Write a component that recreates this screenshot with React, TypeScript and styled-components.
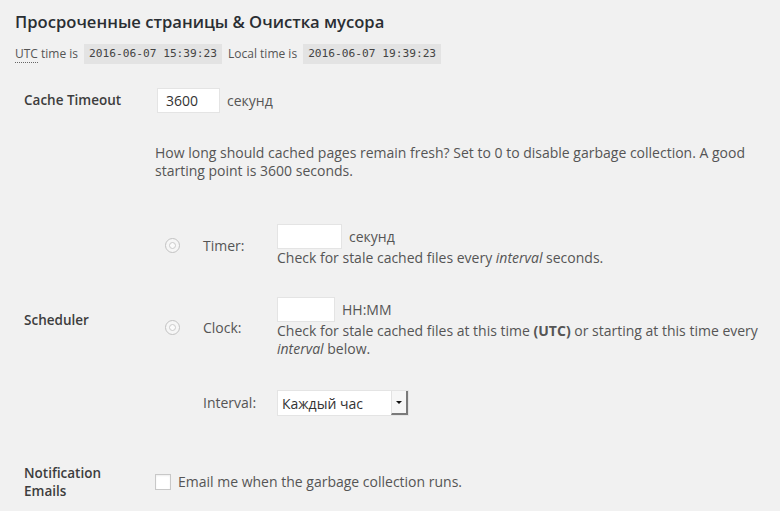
import React from 'react';
import styled, { createGlobalStyle } from 'styled-components';

const GlobalStyle = createGlobalStyle`
  html, body {
    margin: 0;
    padding: 0;
    background: #f1f1f1;
  }
  body {
    font-family: "Open Sans", "Noto Sans", sans-serif;
    font-size: 14px;
    color: #444;
  }
`;

const StyledPage = styled.div`
  width: 780px;
  height: 511px;
  overflow: hidden;
  padding: 11px 0 0 15px;
  box-sizing: border-box;
`;

const StyledTitle = styled.h3`
  margin: 0;
  font-size: 16.6px;
  line-height: 22px;
  font-weight: 600;
  color: #2a2e33;
`;

const StyledTimeLine = styled.p`
  margin: 11px 0 0;
  display: flex;
  align-items: center;
  gap: 6px;
  font-size: 12px;
  line-height: 20px;
  color: #555;
`;

const StyledAbbr = styled.abbr`
  text-decoration: none;
  border-bottom: 1px dotted #666;
  line-height: 15px;
`;

const StyledCode = styled.code`
  background: #e3e3e3;
  padding: 0 5px;
  font-family: "DejaVu Sans Mono", "Liberation Mono", monospace;
  font-size: 11.2px;
  line-height: 20px;
  color: #444;
`;

const StyledForm = styled.div`
  margin: 24px 0 0 9px;
  display: grid;
  grid-template-columns: 131px 1fr;
  row-gap: 44px;
  align-items: center;
`;

const StyledLabel = styled.div<{ $top?: boolean; $mt?: number }>`
  max-width: 112px;
  margin-top: ${p => p.$mt ?? 0}px;
  font-weight: 600;
  font-size: 13.5px;
  line-height: ${p => (p.$top ? '25px' : '18px')};
  color: #3d3d3d;
  align-self: ${p => (p.$top ? 'start' : 'center')};
`;

const StyledInline = styled.div<{ $mt?: number }>`
  display: flex;
  align-items: center;
  gap: 7px;
  margin-top: ${p => p.$mt ?? 0}px;
  line-height: 18px;
  color: #555;
`;

const StyledInput = styled.input<{ $w: number; $ml?: number }>`
  box-sizing: border-box;
  width: ${p => p.$w}px;
  height: 25px;
  margin: 0 0 0 ${p => p.$ml ?? 0}px;
  padding: 2px 8px;
  border: 1px solid #e4e4e4;
  background: #fff;
  font-family: "Open Sans", sans-serif;
  font-size: 14px;
  color: #333;
  outline: none;
`;

const StyledDescription = styled.p<{ $mt?: number }>`
  margin: ${p => p.$mt ?? 0}px 0 0;
  font-size: 14px;
  line-height: 18px;
  color: #555;
`;

const StyledScheduler = styled.div`
  display: grid;
  grid-template-columns: 38px 74px 1fr;
  row-gap: 30px;
  align-items: center;
  padding-left: 10px;
`;

const StyledRadio = styled.span`
  box-sizing: border-box;
  width: 15px;
  height: 15px;
  border-radius: 50%;
  border: 1px solid #c2c2c2;
  background: #f6f6f6;
  display: flex;
  align-items: center;
  justify-content: center;
  &::after {
    content: '';
    width: 7px;
    height: 7px;
    border-radius: 50%;
    border: 1px solid #cacaca;
    background: #fbfbfb;
    box-sizing: border-box;
  }
`;

const StyledSubLabel = styled.div`
  font-size: 14px;
  color: #555;
`;

const StyledSelect = styled.div`
  box-sizing: border-box;
  width: 132px;
  height: 26px;
  margin-top: 2px;
  background: #fff;
  border: 1px solid #e4e4e4;
  display: flex;
  align-items: center;
  justify-content: space-between;
  padding-left: 4px;
  font-size: 14px;
  color: #333;
`;

const StyledSelectButton = styled.span`
  box-sizing: border-box;
  width: 17px;
  height: 24px;
  border-left: 1px solid #e2e2e2;
  border-right: 2px solid #7a7a7a;
  border-bottom: 2px solid #7a7a7a;
  background: #f6f6f6;
  display: flex;
  align-items: center;
  justify-content: center;
  &::after {
    content: '';
    border-left: 3px solid transparent;
    border-right: 3px solid transparent;
    border-top: 3px solid #111;
  }
`;

const StyledCheckbox = styled.span`
  box-sizing: border-box;
  flex: none;
  width: 16px;
  height: 16px;
  border: 1px solid #c8c8c8;
  background: #fff;
  box-shadow: inset 0 1px 2px rgba(0, 0, 0, 0.07);
`;

const App = () => (
  <>
    <GlobalStyle />
    <StyledPage>
      <StyledTitle>Просроченные страницы &amp; Очистка мусора</StyledTitle>
      <StyledTimeLine>
        <span><StyledAbbr title="Coordinated Universal Time">UTC</StyledAbbr> time is</span>
        <StyledCode>2016-06-07 15:39:23</StyledCode>
        <span>Local time is</span>
        <StyledCode>2016-06-07 19:39:23</StyledCode>
      </StyledTimeLine>

      <StyledForm>
        <StyledLabel $top>Cache Timeout</StyledLabel>
        <div>
          <StyledInline>
            <StyledInput $w={63} $ml={2} defaultValue="3600" />
            <span>секунд</span>
          </StyledInline>
          <StyledDescription $mt={31}>
            How long should cached pages remain fresh? Set to 0 to disable garbage collection. A good
            starting point is 3600 seconds.
          </StyledDescription>
        </div>

        <StyledLabel>Scheduler</StyledLabel>
        <StyledScheduler>
          <StyledRadio />
          <StyledSubLabel>Timer:</StyledSubLabel>
          <div>
            <StyledInline>
              <StyledInput $w={65} />
              <span>секунд</span>
            </StyledInline>
            <StyledDescription>
              Check for stale cached files every <em>interval</em> seconds.
            </StyledDescription>
          </div>

          <StyledRadio />
          <StyledSubLabel>Clock:</StyledSubLabel>
          <div>
            <StyledInline>
              <StyledInput $w={58} />
              <span>HH:MM</span>
            </StyledInline>
            <StyledDescription>
              Check for stale cached files at this time <strong>(UTC)</strong> or starting at this time every{' '}
              <em>interval</em> below.
            </StyledDescription>
          </div>

          <span />
          <StyledSubLabel>Interval:</StyledSubLabel>
          <div>
            <StyledSelect>
              <span>Каждый час</span>
              <StyledSelectButton />
            </StyledSelect>
          </div>
        </StyledScheduler>

        <StyledLabel $mt={4}>Notification Emails</StyledLabel>
        <StyledInline $mt={4}>
          <StyledCheckbox />
          <StyledDescription>Email me when the garbage collection runs.</StyledDescription>
        </StyledInline>
      </StyledForm>
    </StyledPage>
  </>
);

export default App;
